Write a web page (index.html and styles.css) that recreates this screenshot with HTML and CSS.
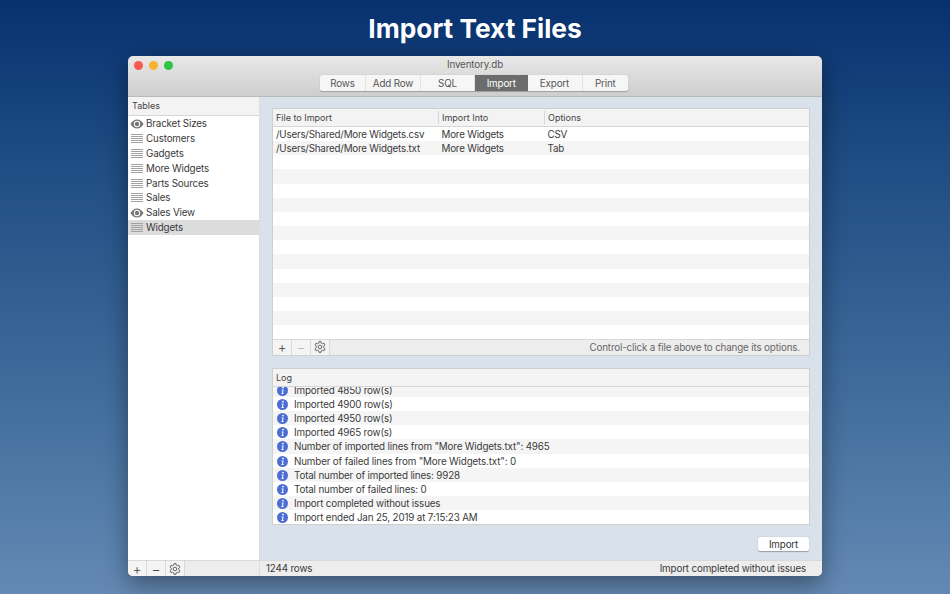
FILE: index.html
```html
<!DOCTYPE html>
<html lang="en">
<head>
    <meta charset="UTF-8">
    <title>Import Text Files</title>
    <link rel="stylesheet" href="styles.css">
</head>
<body>
    <svg class="defs" width="0" height="0">
        <symbol id="eye" viewBox="0 0 14 10">
            <path d="M0.5 5C2.2 2 4.4 0.5 7 0.5S11.8 2 13.5 5C11.8 8 9.6 9.5 7 9.5S2.2 8 0.5 5Z" fill="#777"/>
            <circle cx="7" cy="5" r="3.2" fill="#fff"/>
            <circle cx="7" cy="5" r="2.2" fill="#777"/>
        </symbol>
        <symbol id="lines" viewBox="0 0 12 9">
            <path d="M0 0.5H12M0 2.5H12M0 4.5H12M0 6.5H12M0 8.5H12" stroke="#a2a2a2" stroke-width="1"/>
        </symbol>
        <symbol id="gear" viewBox="0 0 12 12">
            <path d="M5 0.7H7L7.3 2.2L8.5 2.8L9.9 2.2L10.9 3.9L9.8 5.1V6.9L10.9 8.1L9.9 9.8L8.5 9.2L7.3 9.8L7 11.3H5L4.7 9.8L3.5 9.2L2.1 9.8L1.1 8.1L2.2 6.9V5.1L1.1 3.9L2.1 2.2L3.5 2.8L4.7 2.2Z" fill="none" stroke="#555" stroke-width="0.9"/>
            <circle cx="6" cy="6" r="1.8" fill="none" stroke="#555" stroke-width="0.9"/>
        </symbol>
        <symbol id="info" viewBox="0 0 11 11">
            <circle cx="5.5" cy="5.5" r="5.5" fill="#4c6ed4"/>
            <circle cx="6" cy="2.6" r="0.9" fill="#fff"/>
            <path d="M4.6 4.5H6.6L6 8.2H6.8V8.9H4.3V8.2H5L5.4 5.2H4.6Z" fill="#fff"/>
        </symbol>
    </svg>

    <h1 class="headline">Import Text Files</h1>

    <div class="window">
        <header class="titlebar">
            <div class="lights">
                <span class="light red"></span>
                <span class="light yellow"></span>
                <span class="light green"></span>
            </div>
            <div class="doc-title">Inventory.db</div>
            <nav class="tabs">
                <a class="tab tab-rows">Rows</a>
                <a class="tab tab-add">Add Row</a>
                <a class="tab tab-sql">SQL</a>
                <a class="tab tab-import active">Import</a>
                <a class="tab tab-export">Export</a>
                <a class="tab tab-print">Print</a>
            </nav>
        </header>

        <div class="main">
            <aside class="sidebar">
                <div class="col-head sidebar-head">Tables</div>
                <ul class="table-list">
                    <li><svg class="ico"><use href="#eye"/></svg>Bracket Sizes</li>
                    <li><svg class="ico-lines"><use href="#lines"/></svg>Customers</li>
                    <li><svg class="ico-lines"><use href="#lines"/></svg>Gadgets</li>
                    <li><svg class="ico-lines"><use href="#lines"/></svg>More Widgets</li>
                    <li><svg class="ico-lines"><use href="#lines"/></svg>Parts Sources</li>
                    <li><svg class="ico-lines"><use href="#lines"/></svg>Sales</li>
                    <li><svg class="ico"><use href="#eye"/></svg>Sales View</li>
                    <li class="selected"><svg class="ico-lines"><use href="#lines"/></svg>Widgets</li>
                </ul>
                <div class="toolbar">
                    <span class="tool">+</span>
                    <span class="tool tool-minus">&minus;</span>
                    <span class="tool tool-gear"><svg class="gear"><use href="#gear"/></svg></span>
                </div>
            </aside>

            <section class="content">
                <div class="panel files">
                    <div class="col-head file-head">
                        <span class="c1">File to Import</span>
                        <span class="c2">Import Into</span>
                        <span class="c3">Options</span>
                    </div>
                    <div class="file-rows">
                        <div class="file-row"><span class="c1">/Users/Shared/More Widgets.csv</span><span class="c2">More Widgets</span><span class="c3">CSV</span></div>
                        <div class="file-row"><span class="c1">/Users/Shared/More Widgets.txt</span><span class="c2">More Widgets</span><span class="c3">Tab</span></div>
                        <div class="file-row"></div>
                        <div class="file-row"></div>
                        <div class="file-row"></div>
                        <div class="file-row"></div>
                        <div class="file-row"></div>
                        <div class="file-row"></div>
                        <div class="file-row"></div>
                        <div class="file-row"></div>
                        <div class="file-row"></div>
                        <div class="file-row"></div>
                        <div class="file-row"></div>
                        <div class="file-row"></div>
                        <div class="file-row"></div>
                    </div>
                    <div class="toolbar">
                        <span class="tool">+</span>
                        <span class="tool tool-minus off">&minus;</span>
                        <span class="tool tool-gear"><svg class="gear"><use href="#gear"/></svg></span>
                        <span class="hint">Control-click a file above to change its options.</span>
                    </div>
                </div>

                <div class="panel log">
                    <div class="col-head log-head">Log</div>
                    <div class="log-rows">
                        <div class="log-row"><svg class="info"><use href="#info"/></svg>Imported 4850 row(s)</div>
                        <div class="log-row"><svg class="info"><use href="#info"/></svg>Imported 4900 row(s)</div>
                        <div class="log-row"><svg class="info"><use href="#info"/></svg>Imported 4950 row(s)</div>
                        <div class="log-row"><svg class="info"><use href="#info"/></svg>Imported 4965 row(s)</div>
                        <div class="log-row"><svg class="info"><use href="#info"/></svg>Number of imported lines from "More Widgets.txt": 4965</div>
                        <div class="log-row"><svg class="info"><use href="#info"/></svg>Number of failed lines from "More Widgets.txt": 0</div>
                        <div class="log-row"><svg class="info"><use href="#info"/></svg>Total number of imported lines: 9928</div>
                        <div class="log-row"><svg class="info"><use href="#info"/></svg>Total number of failed lines: 0</div>
                        <div class="log-row"><svg class="info"><use href="#info"/></svg>Import completed without issues</div>
                        <div class="log-row"><svg class="info"><use href="#info"/></svg>Import ended Jan 25, 2019 at 7:15:23 AM</div>
                    </div>
                </div>

                <div class="actions"><button class="import-btn">Import</button></div>

                <div class="statusbar">
                    <span>1244 rows</span>
                    <span>Import completed without issues</span>
                </div>
            </section>
        </div>
    </div>
</body>
</html>
```

FILE: styles.css
```css
html, body {
    height: 100%;
}

body {
    margin: 0;
    overflow: hidden;
    background: linear-gradient(180deg, #07316f 0%, #1d4a81 25%, #44709f 70%, #6489b3 100%);
    font-family: Inter, "Liberation Sans", sans-serif;
    font-size: 9.8px;
    letter-spacing: -0.15px;
    color: #3a3a3a;
}

.defs {
    display: block;
    height: 0;
}

.headline {
    margin: 0;
    height: 56px;
    line-height: 57px;
    text-align: center;
    color: #fff;
    font-size: 26.3px;
    font-weight: 700;
    letter-spacing: 0;
}

.window {
    display: flex;
    flex-direction: column;
    width: 694px;
    height: 520px;
    margin-left: 128px;
    border-radius: 5px;
    overflow: hidden;
    box-shadow: 0 8px 24px rgba(0, 0, 0, 0.4);
}

.titlebar {
    position: relative;
    display: flex;
    flex-direction: column;
    align-items: center;
    height: 41px;
    flex: none;
    box-sizing: border-box;
    background: linear-gradient(180deg, #e9e8e8, #cfcece);
    border-bottom: 1px solid #b9b9b9;
}

.lights {
    position: absolute;
    left: 6px;
    top: 4.5px;
    display: flex;
    gap: 6px;
}

.light {
    width: 9px;
    height: 9px;
    border-radius: 50%;
}

.red { background: #f95a52; }
.yellow { background: #f7b32f; }
.green { background: #2fc443; }

.doc-title {
    height: 19px;
    line-height: 18px;
    color: #555;
}

.tabs {
    display: flex;
    height: 16px;
    margin-left: -2px;
    border-radius: 2px;
    background: #f6f6f6;
    box-shadow: 0 0.5px 1px rgba(0, 0, 0, 0.25);
}

.tab {
    line-height: 17px;
    text-align: center;
    color: #555;
    border-right: 1px solid #e2e2e2;
    box-sizing: border-box;
}

.tab-rows { width: 46px; }
.tab-add { width: 55px; }
.tab-sql { width: 54px; }
.tab-import { width: 52.5px; }
.tab-export { width: 55px; }
.tab-print { width: 45.5px; border-right: 0; }

.tab.active {
    background: #6c6c6c;
    color: #fff;
    border-right: 0;
}

.main {
    display: flex;
    flex: 1;
    min-height: 0;
}

.sidebar {
    display: flex;
    flex-direction: column;
    width: 131px;
    flex: none;
    background: #fff;
    border-right: 1px solid #dcdcdc;
}

.col-head {
    flex: none;
    box-sizing: border-box;
    background: #f3f3f3;
    border-bottom: 1px solid #d6d6d6;
    font-size: 9px;
    letter-spacing: 0;
    color: #444;
}

.sidebar-head {
    height: 19px;
    line-height: 18px;
    padding-left: 4px;
}

.table-list {
    flex: 1;
    margin: 0;
    padding: 0.5px 0 0;
    list-style: none;
}

.table-list li {
    display: flex;
    align-items: center;
    height: 14.8px;
    padding-left: 2px;
}

.table-list li.selected {
    background: #dcdcdc;
}

.ico {
    flex: none;
    width: 14px;
    height: 10px;
    margin-right: 2px;
}

.ico-lines {
    flex: none;
    width: 12px;
    height: 9px;
    margin-left: 1px;
    margin-right: 3px;
}

.toolbar {
    display: flex;
    align-items: center;
    flex: none;
    height: 16px;
    box-sizing: border-box;
    background: #ededed;
    border-top: 1px solid #d9d9d9;
}

.tool {
    display: flex;
    align-items: center;
    justify-content: center;
    width: 18px;
    height: 100%;
    font-size: 14px;
    line-height: 1;
    font-weight: 300;
    color: #444;
    border-right: 1px solid #d9d9d9;
    background: #f4f4f4;
}

.tool.off {
    color: #bbb;
}

.tool-gear {
    width: 18px;
}

.gear {
    width: 12px;
    height: 12px;
}

.content {
    display: flex;
    flex-direction: column;
    flex: 1;
    min-width: 0;
    padding-top: 12px;
    background: #d9e1ea;
}

.panel {
    display: flex;
    flex-direction: column;
    margin: 0 13px;
    background: #fff;
    box-shadow: 0 0 0 1px #cfcfcf;
}

.files {
    height: 245.5px;
}

.file-head {
    display: flex;
    height: 18px;
}

.file-head span {
    border-right: 1px solid #d6d6d6;
    margin-top: 2px;
    height: 13px;
    line-height: 13px;
}

.c1, .c2, .c3 {
    box-sizing: border-box;
    padding-left: 3px;
    white-space: nowrap;
}

.c1 { width: 166px; }
.c2 { width: 106px; }
.c3 { flex: 1; }

.file-head .c3 {
    border-right: 0;
}

.file-rows {
    flex: 1;
    overflow: hidden;
}

.file-row {
    display: flex;
    height: 14.17px;
    line-height: 15.5px;
    letter-spacing: -0.2px;
}

.file-row .c2, .file-row .c3 {
    padding-left: 2.5px;
}

.file-row:nth-child(even), .log-row:nth-child(odd) {
    background: #f5f5f5;
}

.hint {
    margin-left: auto;
    padding-right: 9px;
    color: #666;
}

.log {
    height: 155.5px;
    margin-top: 14px;
}

.log-head {
    height: 18px;
    line-height: 17px;
    padding-left: 3px;
}

.log-rows {
    display: flex;
    flex-direction: column;
    justify-content: flex-end;
    flex: 1;
    overflow: hidden;
}

.log-row {
    display: flex;
    align-items: center;
    flex: none;
    box-sizing: border-box;
    height: 14.1px;
    padding: 1px 0 0 4px;
}

.info {
    flex: none;
    width: 11px;
    height: 11px;
    margin-right: 6px;
}

.actions {
    display: flex;
    justify-content: flex-end;
    margin-top: 13px;
    padding-right: 13px;
}

.import-btn {
    width: 51px;
    height: 14px;
    padding: 0;
    border: 0;
    border-radius: 2px;
    background: #fff;
    box-shadow: 0 0.5px 1px rgba(0, 0, 0, 0.3);
    font: inherit;
    letter-spacing: inherit;
    color: #333;
}

.statusbar {
    display: flex;
    justify-content: space-between;
    margin-top: auto;
    height: 16px;
    line-height: 16px;
    padding: 0 16px 0 6px;
    background: #ededed;
    border-top: 1px solid #d9d9d9;
    box-sizing: border-box;
}
```
